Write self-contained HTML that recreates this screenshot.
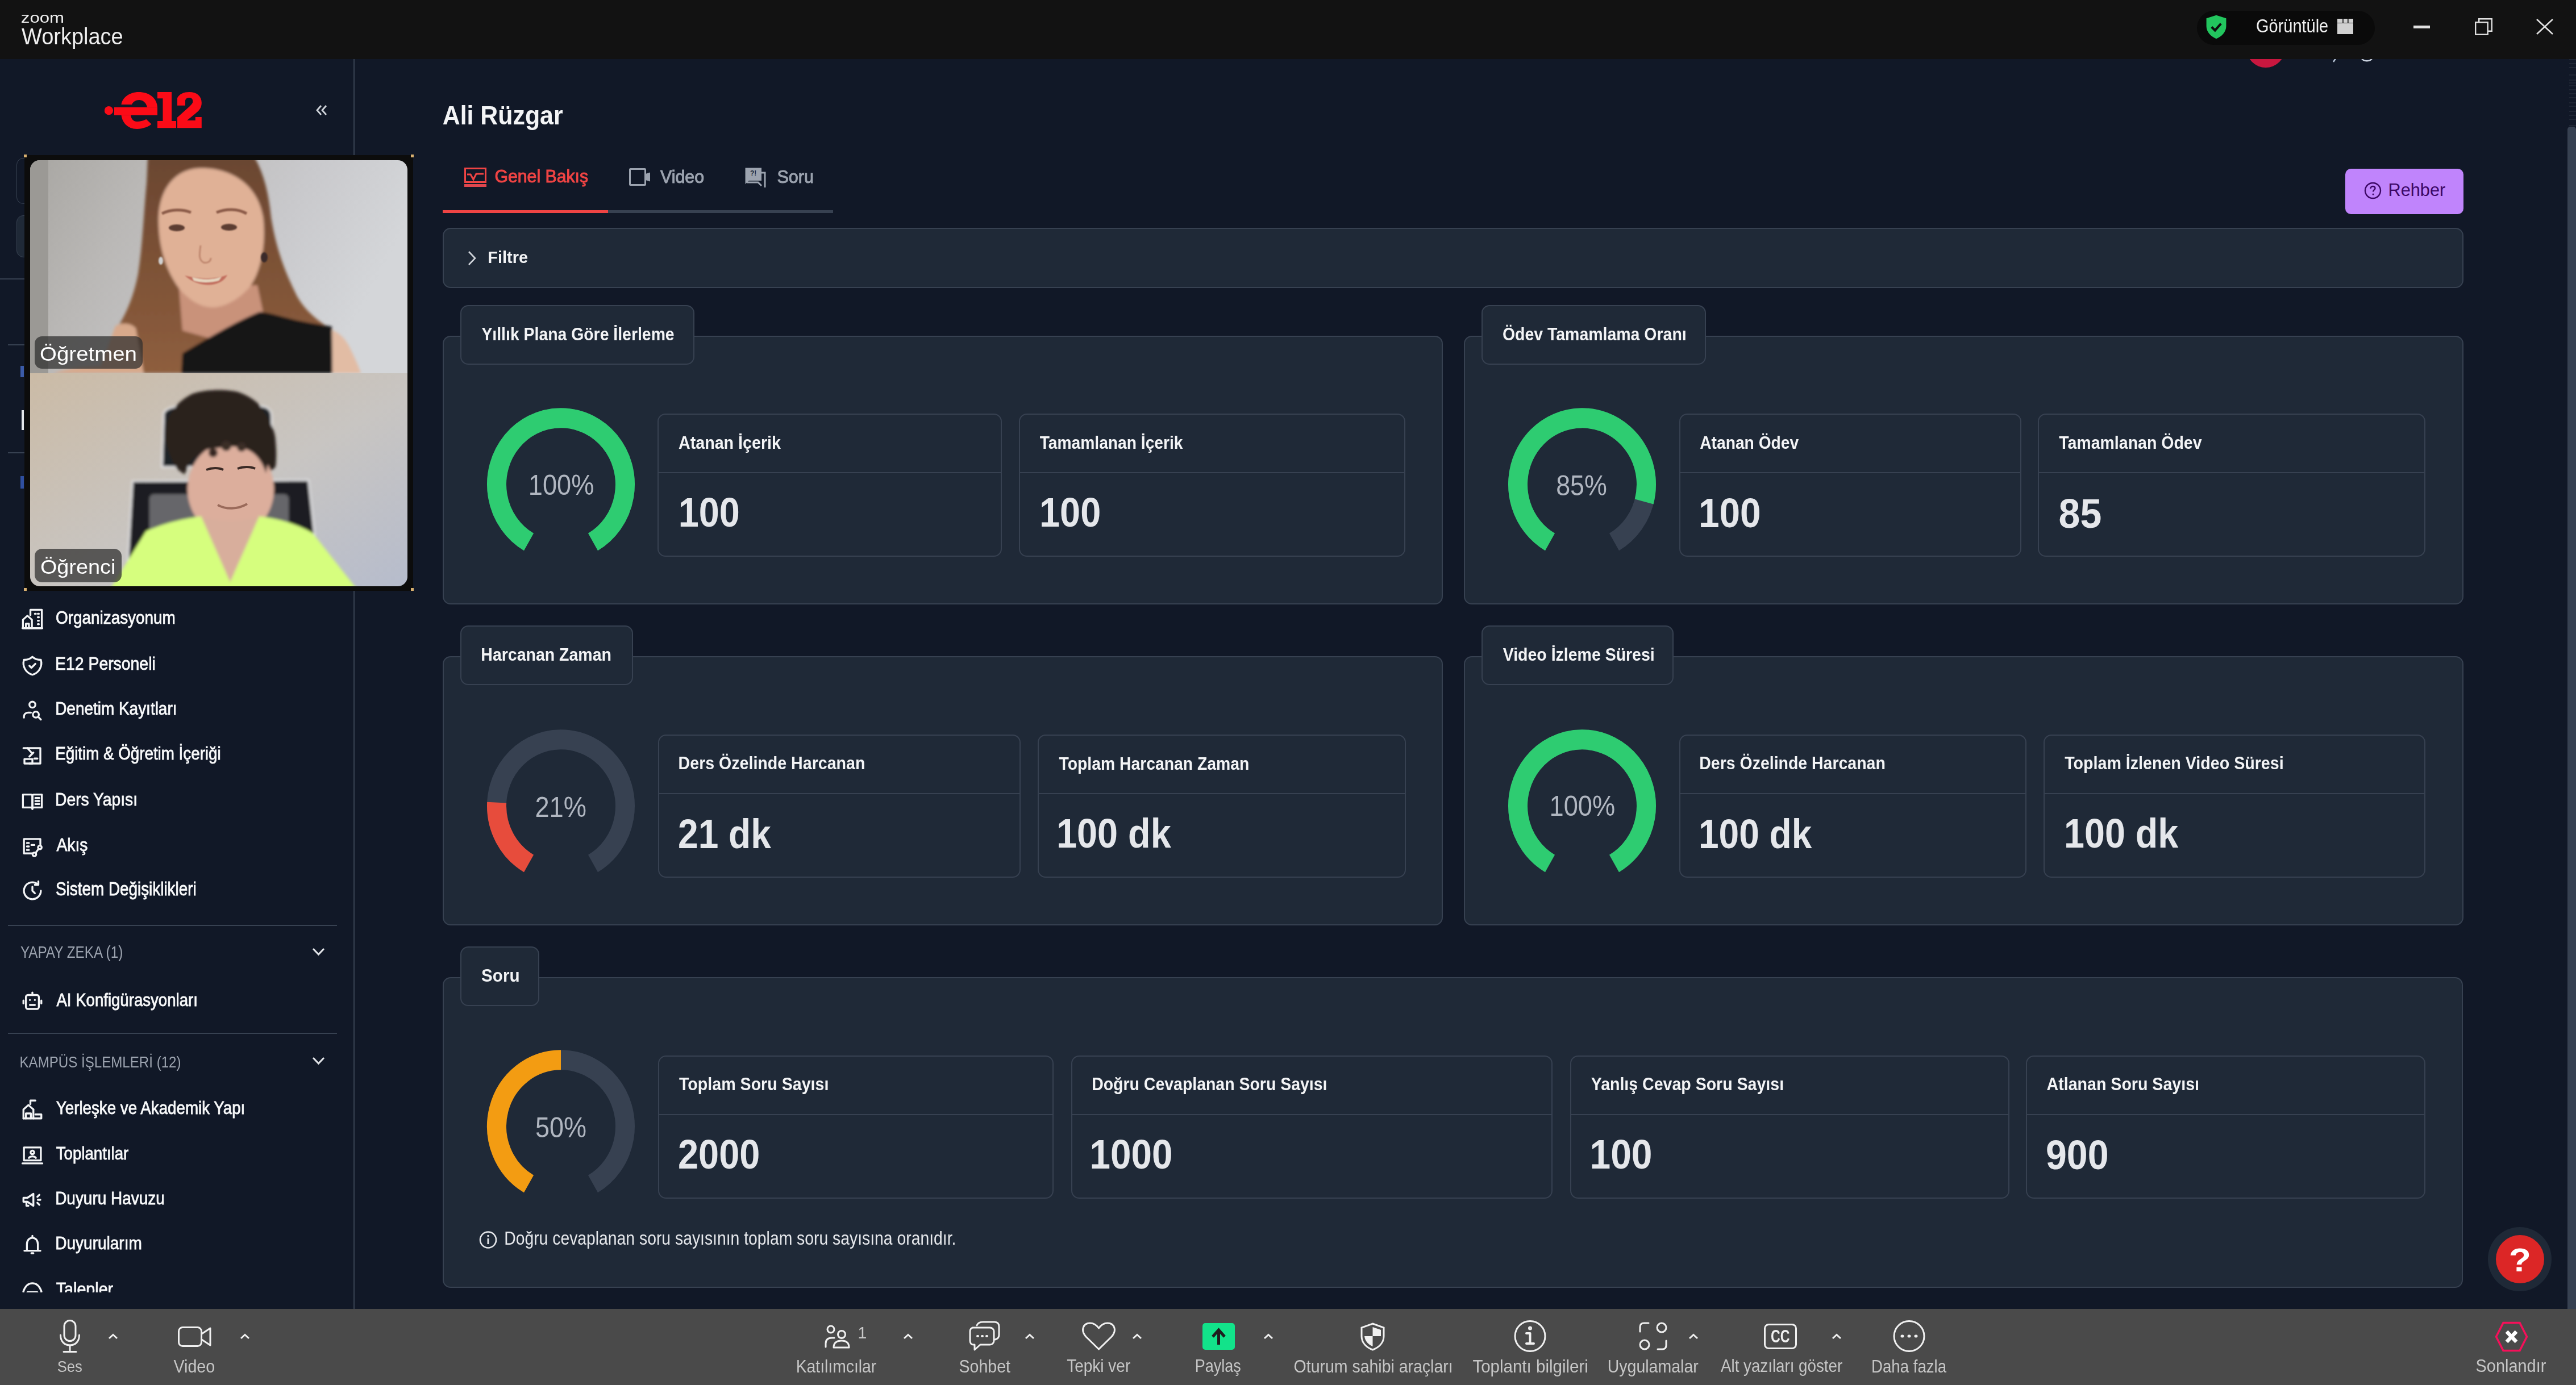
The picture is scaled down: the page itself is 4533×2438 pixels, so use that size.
<!DOCTYPE html>
<html><head><meta charset="utf-8"><title>e12 - Zoom</title>
<style>
html,body{margin:0;padding:0;width:4533px;height:2438px;overflow:hidden;background:#111827}
body{position:relative;font-family:"Liberation Sans",sans-serif}
.a{position:absolute;display:block}
.t{position:absolute;white-space:pre;line-height:1;transform-origin:0 0.85em;font-family:"Liberation Sans",sans-serif}
</style></head><body>
<div class=a style="left:0.0px;top:104.0px;width:4533.0px;height:2200.0px;background:#111827"></div>
<div class=a style="left:3953.0px;top:50.7px;width:68.0px;height:68.0px;background:#c8173f;border-radius:50%"></div>
<svg class=a style="left:4104.0px;top:103.0px;width:8.0px;height:7.0px;" viewBox="0 0 8 7" preserveAspectRatio="none"><path d="M6 0 L2 6" stroke="#b8c4d6" stroke-width="2.5"/></svg>
<svg class=a style="left:4154.0px;top:101.0px;width:22.0px;height:10.0px;" viewBox="0 0 22 10" preserveAspectRatio="none"><path d="M2 1 C3 8 19 8 20 1" stroke="#c8d0dc" stroke-width="2.6" fill="none"/></svg>
<div class=a style="left:4521.0px;top:104.0px;width:12.0px;height:2.0px;background:#1f2634"></div>
<div class=a style="left:4521.0px;top:111.0px;width:12.0px;height:2.0px;background:#1f2634"></div>
<div class=a style="left:4521.0px;top:118.0px;width:12.0px;height:2.0px;background:#1f2634"></div>
<div class=a style="left:4521.0px;top:131.0px;width:12.0px;height:2.0px;background:#1f2634"></div>
<div class=a style="left:4521.0px;top:140.0px;width:12.0px;height:2.0px;background:#1f2634"></div>
<div class=a style="left:4521.0px;top:145.0px;width:12.0px;height:2.0px;background:#1f2634"></div>
<div class=a style="left:4521.0px;top:150.0px;width:12.0px;height:2.0px;background:#1f2634"></div>
<div class=a style="left:4521.0px;top:157.0px;width:12.0px;height:2.0px;background:#1f2634"></div>
<div class=a style="left:4521.0px;top:164.0px;width:12.0px;height:2.0px;background:#1f2634"></div>
<div class=a style="left:4521.0px;top:171.0px;width:12.0px;height:2.0px;background:#1f2634"></div>
<div class=a style="left:4521.0px;top:180.0px;width:12.0px;height:2.0px;background:#1f2634"></div>
<div class=a style="left:4521.0px;top:186.0px;width:12.0px;height:2.0px;background:#1f2634"></div>
<div class=a style="left:4521.0px;top:195.0px;width:12.0px;height:2.0px;background:#1f2634"></div>
<div class=a style="left:4521.0px;top:202.0px;width:12.0px;height:2.0px;background:#1f2634"></div>
<div class=a style="left:4521.0px;top:209.0px;width:12.0px;height:2.0px;background:#1f2634"></div>
<div class=a style="left:4521.0px;top:220.0px;width:12.0px;height:2.0px;background:#1f2634"></div>
<div class=a style="left:0.0px;top:0.0px;width:4533.0px;height:104.0px;background:#121212"></div>
<span class=t style="left:36.8px;top:13.5px;font-size:31.20px;font-weight:400;color:#f0f0f0;transform:scaleY(0.850);">zoom</span>
<span class=t style="left:38.0px;top:45.7px;font-size:37.98px;font-weight:400;color:#f0f0f0;transform:scaleY(1.068);">Workplace</span>
<div class=a style="left:3866.0px;top:19.0px;width:313.0px;height:60.0px;background:#0a0a0a;border-radius:30px"></div>
<svg class=a style="left:3881.0px;top:26.0px;width:38.0px;height:43.0px;" viewBox="0 0 24 27" preserveAspectRatio="none"><path d="M12 0.5 L23 4 V12.5 C23 19 18 24 12 26.5 C6 24 1 19 1 12.5 V4 Z" fill="#22c55e"/><path d="M6.8 13.5 L10.6 17.2 L17.2 9.8" stroke="#0d0d0d" stroke-width="2.6" fill="none"/></svg>
<span class=t style="left:3970.1px;top:32.9px;font-size:28.95px;font-weight:400;color:#f0f0f0;transform:scaleY(1.126);">Görüntüle</span>
<svg class=a style="left:4113.0px;top:33.0px;width:28.0px;height:27.0px;" viewBox="0 0 28 27" preserveAspectRatio="none"><rect x="0" y="8" width="28" height="19" fill="#d0d0d0"/><rect x="0" y="0" width="28" height="7" fill="#d0d0d0"/><rect x="8.5" y="0" width="3" height="7" fill="#5a5a5a"/><rect x="17.5" y="0" width="3" height="7" fill="#5a5a5a"/></svg>
<div class=a style="left:4247.0px;top:45.0px;width:29.0px;height:5.0px;background:#e0e0e0"></div>
<svg class=a style="left:4355.0px;top:32.0px;width:31.0px;height:30.0px;" viewBox="0 0 31 30" preserveAspectRatio="none"><rect x="1.2" y="7.2" width="21.5" height="21.5" fill="none" stroke="#e0e0e0" stroke-width="2.4"/><path d="M7.2 7.2 V1.2 H29.8 V22.8 H22.7" fill="none" stroke="#e0e0e0" stroke-width="2.4"/></svg>
<svg class=a style="left:4463.0px;top:33.0px;width:30.0px;height:28.0px;" viewBox="0 0 30 28" preserveAspectRatio="none"><path d="M1 1 L29 27 M29 1 L1 27" stroke="#e0e0e0" stroke-width="2.6"/></svg>
<div class=a style="left:622.0px;top:104.0px;width:2.0px;height:2200.0px;background:#374151"></div>
<svg class=a style="left:184.0px;top:160.0px;width:172.0px;height:69.0px;" viewBox="0 0 172 69" preserveAspectRatio="none"><g fill="#fb0b17"><circle cx="7.4" cy="34.7" r="7.6"/><path d="M29.5 24 C31 12 44 2 60 2 C78 2 92 12 93 28.8 H75 C73 21 68 16 61 16 C55 16 50 19 48 24 Z"/><path d="M17 28.8 H93 V42.8 H17 Z"/><path d="M29.5 42.8 C31 55 40 67 57 67 C68 67 77 63 82.5 58.5 L73.2 49.8 C69 52.5 63 54 57 54 C51 54 47 50 46 42.8 Z"/><path d="M93 2 H118 V53 H126 V65.3 H93 V53 H102.5 V13.3 H93 Z"/><path d="M128 25.7 V12.4 C132 5 140 2 149 2 C162 2 170.8 9 170.8 21 C170.8 30 166 35 159.8 40 L145 52 H159.8 V46 H170.8 V65.3 H128 V46.7 L150 27 C154 23 155.3 21 155.3 19 C155.3 14 153 12 149 12 C145 12 142 14 142 18 V25.7 Z"/></g></svg>
<svg class=a style="left:555.0px;top:184.0px;width:22.0px;height:20.0px;" viewBox="0 0 22 20" preserveAspectRatio="none"><path d="M10 2 L3 10 L10 18 M19 2 L12 10 L19 18" stroke="#d1d5db" stroke-width="2.8" fill="none"/></svg>
<div class=a style="left:29.0px;top:278.0px;width:111.0px;height:79.0px;border:1.5px solid #374151;border-radius:12px;background:#111827"></div>
<div class=a style="left:29.0px;top:379.0px;width:111.0px;height:72.0px;border:1.5px solid #374151;border-radius:12px;background:#1f2937"></div>
<div class=a style="left:0.0px;top:490.0px;width:600.0px;height:2.0px;background:#374151"></div>
<div class=a style="left:14.0px;top:606.0px;width:586.0px;height:2.0px;background:#374151"></div>
<div class=a style="left:14.0px;top:796.0px;width:586.0px;height:2.0px;background:#374151"></div>
<div class=a style="left:36.0px;top:644.0px;width:6.0px;height:20.0px;background:#3b5ba8"></div>
<div class=a style="left:38.0px;top:722.0px;width:4.0px;height:35.0px;background:#e5e7eb"></div>
<div class=a style="left:36.0px;top:838.0px;width:6.0px;height:22.0px;background:#2f4fa0"></div>
<svg class=a style="left:36.0px;top:1068.8px;width:42.0px;height:42.0px;" viewBox="0 0 24 24" preserveAspectRatio="none"><g fill="none" stroke="#f3f4f6" stroke-width="1.9" stroke-linecap="round" stroke-linejoin="round"><path d="M2.5 21V12.5L7 8.5L11.5 12.5V21Z"/><path d="M5.5 21V16.5H8.5V21"/><path d="M10 8V2.5H21.5V21H11.5"/><path d="M14.5 6.5H15.5M17.5 6.5H18.5M17.5 10H18.5M17.5 13.5H18.5M17.5 17H18.5"/><path d="M2 21H22"/></g></svg><span class=t style="left:98.0px;top:1075.0px;font-size:27.90px;font-weight:400;color:#f9fafb;transform:scaleY(1.137);-webkit-text-stroke:0.7px #f9fafb">Organizasyonum</span>
<svg class=a style="left:36.0px;top:1150.5px;width:42.0px;height:42.0px;" viewBox="0 0 24 24" preserveAspectRatio="none"><g fill="none" stroke="#f3f4f6" stroke-width="1.9" stroke-linecap="round" stroke-linejoin="round"><path d="M12 3a12 12 0 0 0 8.5 3a12 12 0 0 1 -8.5 15a12 12 0 0 1 -8.5 -15a12 12 0 0 0 8.5 -3"/><path d="M9 12l2 2l4 -4"/></g></svg><span class=t style="left:97.1px;top:1154.5px;font-size:28.39px;font-weight:400;color:#f9fafb;transform:scaleY(1.118);-webkit-text-stroke:0.7px #f9fafb">E12 Personeli</span>
<svg class=a style="left:36.0px;top:1229.0px;width:42.0px;height:42.0px;" viewBox="0 0 24 24" preserveAspectRatio="none"><g fill="none" stroke="#f3f4f6" stroke-width="1.9" stroke-linecap="round" stroke-linejoin="round"><path d="M9 6.5a3 3 0 1 0 6 0a3 3 0 1 0 -6 0"/><path d="M3.5 19.5v-1a4 4 0 0 1 4 -4h3"/><path d="M15.5 16.5m-3 0a3 3 0 1 0 6 0a3 3 0 1 0 -6 0"/><path d="M17.8 18.8l2.7 2.7"/></g></svg><span class=t style="left:97.2px;top:1234.5px;font-size:27.95px;font-weight:400;color:#f9fafb;transform:scaleY(1.115);-webkit-text-stroke:0.7px #f9fafb">Denetim Kayıtları</span>
<svg class=a style="left:36.0px;top:1309.0px;width:42.0px;height:42.0px;" viewBox="0 0 24 24" preserveAspectRatio="none"><g fill="none" stroke="#f3f4f6" stroke-width="1.9" stroke-linecap="round" stroke-linejoin="round"><path d="M3 4.5H7L12 10"/><path d="M7 4.5H20V20H9"/><path d="M9 13L13 9"/><path d="M4 15.5H12V20H4Z"/><path d="M14 15H17"/></g></svg><span class=t style="left:97.2px;top:1314.4px;font-size:27.76px;font-weight:400;color:#f9fafb;transform:scaleY(1.122);-webkit-text-stroke:0.7px #f9fafb">Eğitim &amp; Öğretim İçeriği</span>
<svg class=a style="left:36.0px;top:1389.0px;width:42.0px;height:42.0px;" viewBox="0 0 24 24" preserveAspectRatio="none"><g fill="none" stroke="#f3f4f6" stroke-width="1.9" stroke-linecap="round" stroke-linejoin="round"><path d="M2.5 5.5H10.5C11.3 5.5 12 6.2 12 7V20C12 19.2 11.3 18.5 10.5 18.5H2.5Z"/><path d="M21.5 5.5H13.5C12.7 5.5 12 6.2 12 7V20C12 19.2 12.7 18.5 13.5 18.5H21.5Z"/><path d="M15 9H19M15 12H19M15 15H19"/></g></svg><span class=t style="left:97.1px;top:1393.6px;font-size:28.25px;font-weight:400;color:#f9fafb;transform:scaleY(1.108);-webkit-text-stroke:0.7px #f9fafb">Ders Yapısı</span>
<svg class=a style="left:36.0px;top:1469.0px;width:42.0px;height:42.0px;" viewBox="0 0 24 24" preserveAspectRatio="none"><g fill="none" stroke="#f3f4f6" stroke-width="1.9" stroke-linecap="round" stroke-linejoin="round"><path d="M12 19H3.5V4.5H20V10"/><path d="M6.5 8.5H8.5M6.5 12H8.5M6.5 15.5H8.5"/><circle cx="19.5" cy="13" r="1.8"/><circle cx="14" cy="20" r="1.8"/><path d="M18.3 14.3L15.2 18.6"/><path d="M11 10.5H14"/></g></svg><span class=t style="left:99.4px;top:1473.7px;font-size:28.32px;font-weight:400;color:#f9fafb;transform:scaleY(1.115);-webkit-text-stroke:0.7px #f9fafb">Akış</span>
<svg class=a style="left:36.0px;top:1547.0px;width:42.0px;height:42.0px;" viewBox="0 0 24 24" preserveAspectRatio="none"><g fill="none" stroke="#f3f4f6" stroke-width="1.9" stroke-linecap="round" stroke-linejoin="round"><path d="M20.5 12a8.5 8.5 0 1 1 -3 -6.5"/><path d="M18 2.5v3.5h-3.5"/><path d="M12 8v4l2.5 2.5"/></g></svg><span class=t style="left:98.0px;top:1553.3px;font-size:27.87px;font-weight:400;color:#f9fafb;transform:scaleY(1.165);-webkit-text-stroke:0.7px #f9fafb">Sistem Değişiklikleri</span>
<div class=a style="left:14.0px;top:1628.0px;width:579.0px;height:2.0px;background:#374151"></div>
<span class=t style="left:35.9px;top:1666.4px;font-size:24.29px;font-weight:400;color:#9ca3af;transform:scaleY(1.194);">YAPAY ZEKA (1)</span>
<svg class=a style="left:548.0px;top:1666.0px;width:25.0px;height:19.0px;" viewBox="0 0 25 19" preserveAspectRatio="none"><path d="M3 4 L12.5 14 L22 4" stroke="#e5e7eb" stroke-width="3" fill="none"/></svg>
<svg class=a style="left:36.0px;top:1741.0px;width:42.0px;height:42.0px;" viewBox="0 0 24 24" preserveAspectRatio="none"><g fill="none" stroke="#f3f4f6" stroke-width="1.9" stroke-linecap="round" stroke-linejoin="round"><rect x="5.5" y="6" width="13" height="14" rx="2"/><path d="M3 11.5v3M21 11.5v3"/><path d="M9.5 11h.01M14.5 11h.01"/><path d="M9.5 16h5"/><path d="M12 6V3.5"/></g></svg><span class=t style="left:99.4px;top:1747.5px;font-size:27.60px;font-weight:400;color:#f9fafb;transform:scaleY(1.155);-webkit-text-stroke:0.7px #f9fafb">AI Konfigürasyonları</span>
<div class=a style="left:14.0px;top:1818.0px;width:579.0px;height:2.0px;background:#374151"></div>
<span class=t style="left:34.5px;top:1858.5px;font-size:24.11px;font-weight:400;color:#9ca3af;transform:scaleY(1.178);">KAMPÜS İŞLEMLERİ (12)</span>
<svg class=a style="left:548.0px;top:1858.0px;width:25.0px;height:19.0px;" viewBox="0 0 25 19" preserveAspectRatio="none"><path d="M3 4 L12.5 14 L22 4" stroke="#e5e7eb" stroke-width="3" fill="none"/></svg>
<svg class=a style="left:36.0px;top:1932.0px;width:42.0px;height:42.0px;" viewBox="0 0 24 24" preserveAspectRatio="none"><g fill="none" stroke="#f3f4f6" stroke-width="1.9" stroke-linecap="round" stroke-linejoin="round"><path d="M3 21V12L8 7.5L13 12"/><path d="M10 6.5V3H15"/><path d="M5.5 21V16H10.5V21"/><path d="M13 12V21H3"/><path d="M15 17H21V21H13"/></g></svg><span class=t style="left:98.8px;top:1937.9px;font-size:27.74px;font-weight:400;color:#f9fafb;transform:scaleY(1.139);-webkit-text-stroke:0.7px #f9fafb">Yerleşke ve Akademik Yapı</span>
<svg class=a style="left:36.0px;top:2012.0px;width:42.0px;height:42.0px;" viewBox="0 0 24 24" preserveAspectRatio="none"><g fill="none" stroke="#f3f4f6" stroke-width="1.9" stroke-linecap="round" stroke-linejoin="round"><path d="M3.5 4.5H20.5V17.5H3.5Z"/><path d="M2 20.5H22"/><circle cx="12" cy="9.5" r="1.8"/><path d="M8.5 15C9.5 13 14.5 13 15.5 15"/></g></svg><span class=t style="left:98.8px;top:2017.5px;font-size:27.64px;font-weight:400;color:#f9fafb;transform:scaleY(1.122);-webkit-text-stroke:0.7px #f9fafb">Toplantılar</span>
<svg class=a style="left:36.0px;top:2091.0px;width:42.0px;height:42.0px;" viewBox="0 0 24 24" preserveAspectRatio="none"><g fill="none" stroke="#f3f4f6" stroke-width="1.9" stroke-linecap="round" stroke-linejoin="round"><path d="M3 10H7L13 6V18L7 14H3Z"/><path d="M6 14V18H8"/><path d="M17 9l2 -2M17.5 12h2.5M17 15l2 2"/></g></svg><span class=t style="left:97.2px;top:2097.0px;font-size:27.94px;font-weight:400;color:#f9fafb;transform:scaleY(1.100);-webkit-text-stroke:0.7px #f9fafb">Duyuru Havuzu</span>
<svg class=a style="left:36.0px;top:2171.0px;width:42.0px;height:42.0px;" viewBox="0 0 24 24" preserveAspectRatio="none"><g fill="none" stroke="#f3f4f6" stroke-width="1.9" stroke-linecap="round" stroke-linejoin="round"><path d="M12 2.5V4"/><path d="M6.5 17V11C6.5 7 9 4.5 12 4.5C15 4.5 17.5 7 17.5 11V17"/><path d="M4 17.5H20"/><path d="M11 20H13"/></g></svg><span class=t style="left:97.2px;top:2176.2px;font-size:28.04px;font-weight:400;color:#f9fafb;transform:scaleY(1.117);-webkit-text-stroke:0.7px #f9fafb">Duyurularım</span>
<svg class=a style="left:36.0px;top:2251.0px;width:42.0px;height:42.0px;" viewBox="0 0 24 24" preserveAspectRatio="none"><g fill="none" stroke="#f3f4f6" stroke-width="1.9" stroke-linecap="round" stroke-linejoin="round"><path d="M3 12.5C5 7 8.5 4.5 12 4.5C15.5 4.5 19 7 21 12.5"/><path d="M3 12.5V20H21V12.5"/><path d="M7 13.5H17V17H7Z"/></g></svg><span class=t style="left:98.8px;top:2255.7px;font-size:28.65px;font-weight:400;color:#f9fafb;transform:scaleY(1.093);-webkit-text-stroke:0.7px #f9fafb">Talepler</span>
<div class=a style="left:0.0px;top:2275.0px;width:622.0px;height:29.0px;background:#111827"></div>
<div class=a style="left:43.0px;top:273.0px;width:684.0px;height:767.0px;background:#0c0c0c"></div>
<div class=a style="left:53px;top:282px;width:664px;height:375px;border-radius:17px 17px 0 0;overflow:hidden"><svg width="664" height="375" viewBox="0 0 664 375">
<defs>
 <linearGradient id="tbg" x1="0" x2="1" y1="0" y2="0.3"><stop offset="0" stop-color="#a8a6a2"/><stop offset="0.3" stop-color="#bab8b6"/><stop offset="0.7" stop-color="#c9c9cc"/><stop offset="1" stop-color="#d4d6d9"/></linearGradient>
 <linearGradient id="hair1" x1="0" x2="0" y1="0" y2="1"><stop offset="0" stop-color="#6a4632"/><stop offset="0.5" stop-color="#7d5236"/><stop offset="1" stop-color="#8e5e3e"/></linearGradient>
 <filter id="bl1" x="-10%" y="-10%" width="120%" height="120%"><feGaussianBlur stdDeviation="2.5"/></filter>
 <filter id="bl2" x="-10%" y="-10%" width="120%" height="120%"><feGaussianBlur stdDeviation="1.2"/></filter>
</defs>
<rect width="664" height="375" fill="url(#tbg)"/>
<rect x="0" y="0" width="32" height="375" fill="#9b9995"/>
<g filter="url(#bl1)">
<path d="M207 -5 L395 -5 C412 25 420 60 424 100 C432 150 445 190 470 240 C490 275 520 290 552 314 L530 300 L520 375 L133 375 C135 345 140 320 150 300 C170 270 182 240 190 200 C198 150 200 90 205 40 Z" fill="url(#hair1)"/>
<path d="M150 292 C160 285 178 286 186 296 L200 375 L120 375 Z" fill="#d8a98b"/>
<path d="M40 375 C80 362 130 360 170 368 L175 375 Z" fill="#d8a98b"/>
<path d="M530 298 C545 305 552 312 560 325 C570 345 577 360 582 375 L532 375 Z" fill="#e2bca4"/>
<path d="M262 225 L268 300 L340 320 L410 268 L400 220 Z" fill="#c9927a"/>
<path d="M297 14 C350 12 400 40 410 100 C416 150 405 200 385 225 C360 252 335 260 318 259 C295 258 272 240 258 220 C238 190 225 150 226 100 C228 50 255 16 297 14 Z" fill="#e0b196"/>
<path d="M266 375 L268 340 C310 315 360 285 404 267 C420 268 440 275 470 282 C495 287 515 290 531 293 L532 375 Z" fill="#141414"/>
</g>
<g filter="url(#bl2)">
<path d="M232 94 C248 86 268 86 283 92" stroke="#8c5c48" stroke-width="5" fill="none"/>
<path d="M328 92 C345 85 365 85 381 94" stroke="#8c5c48" stroke-width="5" fill="none"/>
<ellipse cx="258" cy="119" rx="14" ry="6" fill="#5c3c32"/>
<ellipse cx="350" cy="118" rx="14" ry="6" fill="#5c3c32"/>
<path d="M300 150 C298 165 296 175 305 180 C312 182 318 178 318 172" stroke="#c08870" stroke-width="3" fill="none"/>
<path d="M272 203 C300 210 325 210 347 202 C338 222 300 228 272 203Z" fill="#c26e5e"/>
<path d="M285 206 C305 211 322 211 337 205 L332 212 C318 216 300 216 288 212Z" fill="#e6d6bf"/>
<ellipse cx="230" cy="177" rx="4" ry="7" fill="#d0d0d0"/>
<ellipse cx="412" cy="171" rx="6" ry="9" fill="#3a2a2a"/>
</g>
</svg></div>
<div class=a style="left:53px;top:657px;width:664px;height:375px;border-radius:0 0 17px 17px;overflow:hidden"><svg width="664" height="375" viewBox="0 0 664 375">
<defs>
 <linearGradient id="sbg" x1="0" x2="1" y1="0" y2="1"><stop offset="0" stop-color="#cbbba6"/><stop offset="0.55" stop-color="#c8c5c2"/><stop offset="1" stop-color="#b6bccc"/></linearGradient>
 <filter id="bl3" x="-10%" y="-10%" width="120%" height="120%"><feGaussianBlur stdDeviation="2.5"/></filter>
</defs>
<rect width="664" height="375" fill="url(#sbg)"/>
<g filter="url(#bl3)">
<path d="M235 70 C240 60 255 58 270 58 L405 58 C418 58 425 65 425 75 L428 165 L232 165 Z" fill="#1f2026" stroke="#e8e8ea" stroke-width="3"/>
<path d="M180 190 L490 188 L505 325 L172 330 Z" fill="#1c1d22" stroke="#e4e4e6" stroke-width="3"/>
<rect x="210" y="213" width="245" height="70" rx="8" fill="#66666a"/>
<path d="M286 36 C310 28 345 28 366 33 C385 40 402 50 409 64 C424 85 432 105 432 121 C434 140 433 155 432 164 C428 170 420 174 415 176 C405 150 390 130 369 127 C350 124 340 132 324 136 C305 140 292 146 284 153 C278 160 275 170 272 178 C262 172 256 166 252 158 C244 140 238 125 238 107 C238 88 244 74 252 64 C262 50 274 42 286 36Z" fill="#2c231f"/>
<ellipse cx="353" cy="204" rx="76" ry="84" fill="#dcae9c"/>
<path d="M284 153 C292 140 310 132 330 132 C350 128 372 126 392 140 C405 150 412 165 415 176 L420 150 C410 128 390 118 369 118 C345 118 320 120 300 130 C290 136 282 146 284 153Z" fill="#2c231f"/>
<circle cx="345" cy="128" r="9" fill="#3a2d28"/><circle cx="322" cy="140" r="8" fill="#352823"/><circle cx="372" cy="130" r="8" fill="#3a2d28"/>
<path d="M141 380 L204 278 C240 262 275 255 301 252 L352 365 L403 252 C440 256 470 266 497 281 L575 380 Z" fill="#d6fe7e"/>
<path d="M301 252 L352 368 L403 252 C380 262 325 262 301 252Z" fill="#d8ae9c"/>
</g>
<path d="M310 170 C320 166 332 166 340 170" stroke="#3a2a25" stroke-width="4" fill="none"/>
<path d="M365 168 C375 164 388 164 396 168" stroke="#3a2a25" stroke-width="4" fill="none"/>
<path d="M330 232 C345 240 365 240 382 230" stroke="#9a6a5a" stroke-width="4" fill="none"/>
</svg></div>
<div class=a style="left:61.0px;top:592.0px;width:190.0px;height:57.0px;background:rgba(45,45,45,0.72);border-radius:13px"></div>
<span class=t style="left:70.1px;top:603.3px;font-size:38.45px;font-weight:400;color:#ffffff;transform:scaleY(0.905);">Öğretmen</span>
<div class=a style="left:61.4px;top:966.0px;width:152.6px;height:59.0px;background:rgba(45,45,45,0.72);border-radius:13px"></div>
<span class=t style="left:70.9px;top:978.7px;font-size:37.82px;font-weight:400;color:#ffffff;transform:scaleY(0.927);">Öğrenci</span>
<div class=a style="left:42.0px;top:272.0px;width:5.0px;height:5.0px;background:#d8b070"></div>
<div class=a style="left:723.0px;top:272.0px;width:5.0px;height:5.0px;background:#d8b070"></div>
<div class=a style="left:42.0px;top:1035.0px;width:5.0px;height:5.0px;background:#d8b070"></div>
<div class=a style="left:723.0px;top:1035.0px;width:5.0px;height:5.0px;background:#d8b070"></div>
<span class=t style="left:778.7px;top:183.4px;font-size:42.86px;font-weight:700;color:#f3f4f6;transform:scaleY(1.062);">Ali Rüzgar</span>
<svg class=a style="left:817.0px;top:295.0px;width:39.0px;height:35.0px;" viewBox="0 0 39 35" preserveAspectRatio="none"><g fill="none" stroke="#ef4444" stroke-width="3"><rect x="1.5" y="1.5" width="36" height="24"/><path d="M5 12 H11 L16 21 L21 11 H34"/></g><rect x="0" y="29" width="39" height="5" fill="#e0464e"/></svg>
<span class=t style="left:870.5px;top:296.3px;font-size:30.22px;font-weight:400;color:#ef4444;transform:scaleY(1.055);-webkit-text-stroke:1px #ef4444">Genel Bakış</span>
<svg class=a style="left:1107.0px;top:296.0px;width:38.0px;height:31.0px;" viewBox="0 0 38 31" preserveAspectRatio="none"><g fill="none" stroke="#9ca3af" stroke-width="3"><rect x="1.5" y="1.5" width="27" height="28" rx="1"/></g><path d="M29 10 L37 7.5 V23.5 L29 21 Z" fill="#9ca3af"/></svg>
<span class=t style="left:1162.0px;top:296.2px;font-size:30.40px;font-weight:400;color:#9ca3af;transform:scaleY(1.049);-webkit-text-stroke:1px #9ca3af">Video</span>
<svg class=a style="left:1310.0px;top:294.0px;width:41.0px;height:37.0px;" viewBox="0 0 41 37" preserveAspectRatio="none"><path d="M1.5 1.5 H30 V24 H8 L1.5 30 Z" fill="#9ca3af"/><path d="M30 10 H36 V36" fill="none" stroke="#9ca3af" stroke-width="3"/><path d="M4 27 H24 L30 33" fill="none" stroke="#9ca3af" stroke-width="3"/><text x="10" y="15" font-size="12" font-family="Liberation Sans" font-weight="700" fill="#1f2937">?!</text></svg>
<span class=t style="left:1367.5px;top:296.1px;font-size:30.50px;font-weight:400;color:#9ca3af;transform:scaleY(1.045);-webkit-text-stroke:1px #9ca3af">Soru</span>
<div class=a style="left:779.0px;top:370.0px;width:687.0px;height:5.0px;background:#374151"></div>
<div class=a style="left:779.0px;top:370.0px;width:291.0px;height:5.0px;background:#ef4444"></div>
<div class=a style="left:4127.0px;top:297.0px;width:208.0px;height:80.0px;background:#c084fc;border-radius:10px"></div>
<svg class=a style="left:4160.0px;top:320.0px;width:31.0px;height:31.0px;" viewBox="0 0 31 31" preserveAspectRatio="none"><circle cx="15.5" cy="15.5" r="13.5" fill="none" stroke="#3b0764" stroke-width="2.4"/><path d="M11.5 12 C11.5 9 13.5 8 15.5 8 C18 8 19.5 9.5 19.5 11.5 C19.5 14 16 14.5 16 17.5" fill="none" stroke="#3b0764" stroke-width="2.4"/><circle cx="16" cy="22" r="1.5" fill="#3b0764"/></svg>
<span class=t style="left:4202.5px;top:319.5px;font-size:30.72px;font-weight:400;color:#3b0764;transform:scaleY(1.000);">Rehber</span>
<div class=a style="left:779.0px;top:401.0px;width:3556.0px;height:106.0px;background:#1f2937;border:2px solid #374151;border-radius:14px;box-sizing:border-box"></div>
<svg class=a style="left:822.0px;top:441.0px;width:18.0px;height:27.0px;" viewBox="0 0 18 27" preserveAspectRatio="none"><path d="M3 2 L14 13.5 L3 25" fill="none" stroke="#d1d5db" stroke-width="2.6"/></svg>
<span class=t style="left:858.3px;top:439.4px;font-size:28.94px;font-weight:700;color:#f3f4f6;transform:scaleY(1.027);">Filtre</span>
<div class=a style="left:779.0px;top:591.0px;width:1760.0px;height:473.0px;background:#1f2937;border:2px solid #374151;border-radius:14px;box-sizing:border-box"></div><div class=a style="left:810.0px;top:536.5px;width:412.0px;height:105.5px;background:#1f2937;border:2px solid #374151;border-radius:14px;box-sizing:border-box"></div><span class=t style="left:847.4px;top:574.9px;font-size:28.40px;font-weight:700;color:#f3f4f6;transform:scaleY(1.123);">Yıllık Plana Göre İlerleme</span>
<svg class=a style="left:852.2px;top:712.8px;width:270.0px;height:279.5px;" viewBox="0 0 270 270" preserveAspectRatio="none"><path d="M78.50 232.86 A113 113 0 1 1 191.50 232.86" stroke="#374151" stroke-width="34" fill="none"/><path d="M78.50 232.86 A113 113 0 1 1 191.50 232.86" stroke="#2ecc71" stroke-width="34" fill="none"/></svg><span class=t style="left:929.8px;top:833.3px;font-size:45.18px;font-weight:400;color:#b0b6c0;transform:scaleY(1.087);">100%</span>
<div class=a style="left:1157.4px;top:728.0px;width:605.3px;height:252.0px;border:2px solid #374151;border-radius:14px;box-sizing:border-box"></div><div class=a style="left:1157.4px;top:831.0px;width:605.3px;height:2.0px;background:#374151"></div><span class=t style="left:1194.0px;top:765.6px;font-size:28.66px;font-weight:700;color:#f3f4f6;transform:scaleY(1.113);">Atanan İçerik</span><span class=t style="left:1193.7px;top:873.4px;font-size:64.78px;font-weight:700;color:#e5e7eb;transform:scaleY(1.107);">100</span>
<div class=a style="left:1792.5px;top:728.0px;width:680.5px;height:252.0px;border:2px solid #374151;border-radius:14px;box-sizing:border-box"></div><div class=a style="left:1792.5px;top:831.0px;width:680.5px;height:2.0px;background:#374151"></div><span class=t style="left:1829.7px;top:766.0px;font-size:28.21px;font-weight:700;color:#f3f4f6;transform:scaleY(1.130);">Tamamlanan İçerik</span><span class=t style="left:1829.1px;top:873.4px;font-size:64.78px;font-weight:700;color:#e5e7eb;transform:scaleY(1.107);">100</span>
<div class=a style="left:2576.0px;top:591.0px;width:1759.0px;height:473.0px;background:#1f2937;border:2px solid #374151;border-radius:14px;box-sizing:border-box"></div><div class=a style="left:2607.0px;top:536.5px;width:395.0px;height:105.5px;background:#1f2937;border:2px solid #374151;border-radius:14px;box-sizing:border-box"></div><span class=t style="left:2643.9px;top:574.8px;font-size:28.48px;font-weight:700;color:#f3f4f6;transform:scaleY(1.119);">Ödev Tamamlama Oranı</span>
<svg class=a style="left:2649.0px;top:712.8px;width:270.0px;height:279.5px;" viewBox="0 0 270 270" preserveAspectRatio="none"><path d="M78.50 232.86 A113 113 0 1 1 191.50 232.86" stroke="#374151" stroke-width="34" fill="none"/><path d="M78.50 232.86 A113 113 0 1 1 244.15 164.25" stroke="#2ecc71" stroke-width="34" fill="none"/></svg><span class=t style="left:2738.2px;top:833.6px;font-size:44.82px;font-weight:400;color:#b0b6c0;transform:scaleY(1.096);">85%</span>
<div class=a style="left:2954.5px;top:728.0px;width:602.5px;height:252.0px;border:2px solid #374151;border-radius:14px;box-sizing:border-box"></div><div class=a style="left:2954.5px;top:831.0px;width:602.5px;height:2.0px;background:#374151"></div><span class=t style="left:2991.2px;top:766.0px;font-size:28.22px;font-weight:700;color:#f3f4f6;transform:scaleY(1.130);">Atanan Ödev</span><span class=t style="left:2988.9px;top:872.6px;font-size:65.73px;font-weight:700;color:#e5e7eb;transform:scaleY(1.091);">100</span>
<div class=a style="left:3586.0px;top:728.0px;width:682.0px;height:252.0px;border:2px solid #374151;border-radius:14px;box-sizing:border-box"></div><div class=a style="left:3586.0px;top:831.0px;width:682.0px;height:2.0px;background:#374151"></div><span class=t style="left:3623.2px;top:765.8px;font-size:28.50px;font-weight:700;color:#f3f4f6;transform:scaleY(1.119);">Tamamlanan Ödev</span><span class=t style="left:3622.6px;top:870.7px;font-size:68.00px;font-weight:700;color:#e5e7eb;transform:scaleY(1.055);">85</span>
<div class=a style="left:779.0px;top:1155.0px;width:1760.0px;height:474.0px;background:#1f2937;border:2px solid #374151;border-radius:14px;box-sizing:border-box"></div><div class=a style="left:810.0px;top:1100.5px;width:304.0px;height:105.5px;background:#1f2937;border:2px solid #374151;border-radius:14px;box-sizing:border-box"></div><span class=t style="left:846.3px;top:1138.8px;font-size:28.51px;font-weight:700;color:#f3f4f6;transform:scaleY(1.118);">Harcanan Zaman</span>
<svg class=a style="left:852.2px;top:1279.3px;width:270.0px;height:279.4px;" viewBox="0 0 270 270" preserveAspectRatio="none"><path d="M78.50 232.86 A113 113 0 1 1 191.50 232.86" stroke="#374151" stroke-width="34" fill="none"/><path d="M78.50 232.86 A113 113 0 0 1 22.15 129.09" stroke="#e74c3c" stroke-width="34" fill="none"/></svg><span class=t style="left:941.4px;top:1399.5px;font-size:45.26px;font-weight:400;color:#b0b6c0;transform:scaleY(1.121);">21%</span>
<div class=a style="left:1157.8px;top:1292.6px;width:638.6px;height:252.0px;border:2px solid #374151;border-radius:14px;box-sizing:border-box"></div><div class=a style="left:1157.8px;top:1395.6px;width:638.6px;height:2.0px;background:#374151"></div><span class=t style="left:1193.6px;top:1330.3px;font-size:28.58px;font-weight:700;color:#f3f4f6;transform:scaleY(1.116);">Ders Özelinde Harcanan</span><span class=t style="left:1193.1px;top:1438.7px;font-size:64.03px;font-weight:700;color:#e5e7eb;transform:scaleY(1.120);">21 dk</span>
<div class=a style="left:1826.3px;top:1292.6px;width:647.7px;height:252.0px;border:2px solid #374151;border-radius:14px;box-sizing:border-box"></div><div class=a style="left:1826.3px;top:1395.6px;width:647.7px;height:2.0px;background:#374151"></div><span class=t style="left:1863.5px;top:1330.5px;font-size:28.33px;font-weight:700;color:#f3f4f6;transform:scaleY(1.125);">Toplam Harcanan Zaman</span><span class=t style="left:1859.1px;top:1438.1px;font-size:64.75px;font-weight:700;color:#e5e7eb;transform:scaleY(1.108);">100 dk</span>
<div class=a style="left:2576.0px;top:1155.0px;width:1759.0px;height:474.0px;background:#1f2937;border:2px solid #374151;border-radius:14px;box-sizing:border-box"></div><div class=a style="left:2607.0px;top:1100.5px;width:338.0px;height:105.5px;background:#1f2937;border:2px solid #374151;border-radius:14px;box-sizing:border-box"></div><span class=t style="left:2644.7px;top:1138.8px;font-size:28.49px;font-weight:700;color:#f3f4f6;transform:scaleY(1.119);">Video İzleme Süresi</span>
<svg class=a style="left:2649.0px;top:1279.3px;width:270.0px;height:279.4px;" viewBox="0 0 270 270" preserveAspectRatio="none"><path d="M78.50 232.86 A113 113 0 1 1 191.50 232.86" stroke="#374151" stroke-width="34" fill="none"/><path d="M78.50 232.86 A113 113 0 1 1 191.50 232.86" stroke="#2ecc71" stroke-width="34" fill="none"/></svg><span class=t style="left:2726.5px;top:1398.1px;font-size:45.22px;font-weight:400;color:#b0b6c0;transform:scaleY(1.090);">100%</span>
<div class=a style="left:2954.5px;top:1292.6px;width:611.2px;height:252.0px;border:2px solid #374151;border-radius:14px;box-sizing:border-box"></div><div class=a style="left:2954.5px;top:1395.6px;width:611.2px;height:2.0px;background:#374151"></div><span class=t style="left:2990.3px;top:1330.4px;font-size:28.47px;font-weight:700;color:#f3f4f6;transform:scaleY(1.120);">Ders Özelinde Harcanan</span><span class=t style="left:2989.0px;top:1438.7px;font-size:64.00px;font-weight:700;color:#e5e7eb;transform:scaleY(1.121);">100 dk</span>
<div class=a style="left:3596.0px;top:1292.6px;width:672.0px;height:252.0px;border:2px solid #374151;border-radius:14px;box-sizing:border-box"></div><div class=a style="left:3596.0px;top:1395.6px;width:672.0px;height:2.0px;background:#374151"></div><span class=t style="left:3633.2px;top:1330.3px;font-size:28.63px;font-weight:700;color:#f3f4f6;transform:scaleY(1.114);">Toplam İzlenen Video Süresi</span><span class=t style="left:3632.1px;top:1438.2px;font-size:64.59px;font-weight:700;color:#e5e7eb;transform:scaleY(1.111);">100 dk</span>
<div class=a style="left:779.0px;top:1720.0px;width:3555.0px;height:547.0px;background:#1f2937;border:2px solid #374151;border-radius:14px;box-sizing:border-box"></div><div class=a style="left:810.0px;top:1665.5px;width:138.6px;height:105.5px;background:#1f2937;border:2px solid #374151;border-radius:14px;box-sizing:border-box"></div><span class=t style="left:847.1px;top:1702.9px;font-size:29.59px;font-weight:700;color:#f3f4f6;transform:scaleY(1.078);">Soru</span>
<svg class=a style="left:852.2px;top:1843.3px;width:270.0px;height:279.4px;" viewBox="0 0 270 270" preserveAspectRatio="none"><path d="M78.50 232.86 A113 113 0 1 1 191.50 232.86" stroke="#374151" stroke-width="34" fill="none"/><path d="M78.50 232.86 A113 113 0 0 1 135.00 22.00" stroke="#f39c12" stroke-width="34" fill="none"/></svg><span class=t style="left:941.9px;top:1964.4px;font-size:45.03px;font-weight:400;color:#b0b6c0;transform:scaleY(1.117);">50%</span>
<div class=a style="left:1157.8px;top:1857.5px;width:696.2px;height:252.0px;border:2px solid #374151;border-radius:14px;box-sizing:border-box"></div><div class=a style="left:1157.8px;top:1960.5px;width:696.2px;height:2.0px;background:#374151"></div><span class=t style="left:1195.0px;top:1895.2px;font-size:28.62px;font-weight:700;color:#f3f4f6;transform:scaleY(1.114);">Toplam Soru Sayısı</span><span class=t style="left:1193.1px;top:2002.9px;font-size:64.79px;font-weight:700;color:#e5e7eb;transform:scaleY(1.107);">2000</span>
<div class=a style="left:1885.4px;top:1857.5px;width:846.6px;height:252.0px;border:2px solid #374151;border-radius:14px;box-sizing:border-box"></div><div class=a style="left:1885.4px;top:1960.5px;width:846.6px;height:2.0px;background:#374151"></div><span class=t style="left:1921.2px;top:1895.3px;font-size:28.46px;font-weight:700;color:#f3f4f6;transform:scaleY(1.120);">Doğru Cevaplanan Soru Sayısı</span><span class=t style="left:1917.6px;top:2002.3px;font-size:65.57px;font-weight:700;color:#e5e7eb;transform:scaleY(1.094);">1000</span>
<div class=a style="left:2762.8px;top:1857.5px;width:772.9px;height:252.0px;border:2px solid #374151;border-radius:14px;box-sizing:border-box"></div><div class=a style="left:2762.8px;top:1960.5px;width:772.9px;height:2.0px;background:#374151"></div><span class=t style="left:2799.7px;top:1895.2px;font-size:28.54px;font-weight:700;color:#f3f4f6;transform:scaleY(1.117);">Yanlış Cevap Soru Sayısı</span><span class=t style="left:2797.5px;top:2002.0px;font-size:65.92px;font-weight:700;color:#e5e7eb;transform:scaleY(1.088);">100</span>
<div class=a style="left:3565.0px;top:1857.5px;width:702.6px;height:252.0px;border:2px solid #374151;border-radius:14px;box-sizing:border-box"></div><div class=a style="left:3565.0px;top:1960.5px;width:702.6px;height:2.0px;background:#374151"></div><span class=t style="left:3601.6px;top:1895.2px;font-size:28.59px;font-weight:700;color:#f3f4f6;transform:scaleY(1.115);">Atlanan Soru Sayısı</span><span class=t style="left:3600.0px;top:2001.7px;font-size:66.25px;font-weight:700;color:#e5e7eb;transform:scaleY(1.083);">900</span>
<svg class=a style="left:843.0px;top:2166.0px;width:32.0px;height:33.0px;" viewBox="0 0 32 33" preserveAspectRatio="none"><circle cx="16" cy="16.5" r="14" fill="none" stroke="#e5e7eb" stroke-width="2.6"/><path d="M16 14 V24" stroke="#e5e7eb" stroke-width="3"/><circle cx="16" cy="9.5" r="1.8" fill="#e5e7eb"/></svg>
<span class=t style="left:887.2px;top:2166.9px;font-size:28.33px;font-weight:400;color:#e5e7eb;transform:scaleY(1.176);">Doğru cevaplanan soru sayısının toplam soru sayısına oranıdır.</span>
<div class=a style="left:4377.5px;top:2160.0px;width:112.2px;height:113.0px;background:#1f2937;border-radius:50%"></div>
<div class=a style="left:4391.5px;top:2173.8px;width:85.1px;height:85.2px;background:#dc2626;border-radius:50%"></div>
<span class=t style="left:4414.8px;top:2183.6px;font-size:64.00px;font-weight:700;color:#ffffff;transform:scaleY(0.906);">?</span>
<div class=a style="left:4518.0px;top:223.0px;width:15.0px;height:2081.0px;background:#374151;border-radius:5px 5px 0 0"></div>
<div class=a style="left:0.0px;top:2304.0px;width:4533.0px;height:134.0px;background:#4a4a4a"></div>
<svg class=a style="left:104.0px;top:2323.0px;width:38.0px;height:58.0px;" viewBox="0 0 38 58" preserveAspectRatio="none"><g fill="none" stroke="#f0f0f0" stroke-width="2" stroke-linecap="round" stroke-linejoin="round"><rect x="9" y="1.5" width="20" height="36" rx="10" stroke-width="3"/><path d="M2.5 27 C2.5 38 9 45 19 45 C29 45 35.5 38 35.5 27" stroke-width="3"/><path d="M19 45 V56 M8 56.5 H30" stroke-width="3"/></g></svg>
<svg class=a style="left:189.0px;top:2347.0px;width:20.0px;height:11.0px;" viewBox="0 0 20 11" preserveAspectRatio="none"><path d="M3 9 L10 2.5 L17 9" fill="none" stroke="#f0f0f0" stroke-width="3"/></svg>
<span class=t style="left:100.7px;top:2393.7px;font-size:25.61px;font-weight:400;color:#c6c6c6;transform:scaleY(1.104);">Ses</span>
<svg class=a style="left:313.0px;top:2335.0px;width:59.0px;height:36.0px;" viewBox="0 0 59 36" preserveAspectRatio="none"><g fill="none" stroke="#f0f0f0" stroke-width="2" stroke-linecap="round" stroke-linejoin="round"><rect x="1.5" y="1.5" width="40" height="33" rx="7" stroke-width="3"/><path d="M42 13 L57 3 V33 L42 23" stroke-width="3"/></g></svg>
<svg class=a style="left:421.0px;top:2347.0px;width:20.0px;height:11.0px;" viewBox="0 0 20 11" preserveAspectRatio="none"><path d="M3 9 L10 2.5 L17 9" fill="none" stroke="#f0f0f0" stroke-width="3"/></svg>
<span class=t style="left:305.5px;top:2391.7px;font-size:28.60px;font-weight:400;color:#c6c6c6;transform:scaleY(1.064);">Video</span>
<svg class=a style="left:1451.0px;top:2332.0px;width:45.0px;height:42.0px;" viewBox="0 0 45 42" preserveAspectRatio="none"><g fill="none" stroke="#f0f0f0" stroke-width="2" stroke-linecap="round" stroke-linejoin="round"><circle cx="11" cy="8" r="6" stroke-width="3"/><circle cx="30" cy="17" r="6.5" stroke-width="3"/><path d="M2 39 V33 C2 26 6 23 13 23 H17" stroke-width="3"/><path d="M16 40 H43 C43 31 38 28 30 28 C22 28 16 31 16 40Z" stroke-width="3"/></g></svg>
<span class=t style="left:1509.5px;top:2331.5px;font-size:28.41px;font-weight:400;color:#c8c8c8;transform:scaleY(1.025);">1</span>
<svg class=a style="left:1588.0px;top:2347.0px;width:20.0px;height:11.0px;" viewBox="0 0 20 11" preserveAspectRatio="none"><path d="M3 9 L10 2.5 L17 9" fill="none" stroke="#f0f0f0" stroke-width="3"/></svg>
<span class=t style="left:1400.7px;top:2391.9px;font-size:28.31px;font-weight:400;color:#c6c6c6;transform:scaleY(1.075);">Katılımcılar</span>
<svg class=a style="left:1705.0px;top:2325.0px;width:55.0px;height:54.0px;" viewBox="0 0 55 54" preserveAspectRatio="none"><g fill="none" stroke="#f0f0f0" stroke-width="2" stroke-linecap="round" stroke-linejoin="round"><path d="M14 8 C16 3 20 2 25 2 H45 C50 2 53 5 53 10 V25 C53 30 50 32 46 33" stroke-width="3"/><path d="M6 12 H37 C41 12 44 15 44 19 V35 C44 39 41 42 37 42 H20 L10 51 V42 H8 C4 42 2 39 2 35 V19 C2 15 4 12 8 12Z" stroke-width="3"/><path d="M15 27 H16 M23 27 H24 M31 27 H32" stroke-width="4"/></g></svg>
<svg class=a style="left:1802.0px;top:2347.0px;width:20.0px;height:11.0px;" viewBox="0 0 20 11" preserveAspectRatio="none"><path d="M3 9 L10 2.5 L17 9" fill="none" stroke="#f0f0f0" stroke-width="3"/></svg>
<span class=t style="left:1687.6px;top:2391.8px;font-size:28.53px;font-weight:400;color:#c6c6c6;transform:scaleY(1.067);">Sohbet</span>
<svg class=a style="left:1903.0px;top:2327.0px;width:61.0px;height:51.0px;" viewBox="0 0 61 51" preserveAspectRatio="none"><g fill="none" stroke="#f0f0f0" stroke-width="2" stroke-linecap="round" stroke-linejoin="round"><path d="M30.5 48 L8 26 C-2 15 3 2 15 2 C22 2 27 6 30.5 11 C34 6 39 2 46 2 C58 2 63 15 53 26 Z" stroke-width="3"/></g></svg>
<svg class=a style="left:1991.0px;top:2347.0px;width:20.0px;height:11.0px;" viewBox="0 0 20 11" preserveAspectRatio="none"><path d="M3 9 L10 2.5 L17 9" fill="none" stroke="#f0f0f0" stroke-width="3"/></svg>
<span class=t style="left:1877.2px;top:2392.2px;font-size:28.01px;font-weight:400;color:#c6c6c6;transform:scaleY(1.087);">Tepki ver</span>
<svg class=a style="left:2116.0px;top:2329.0px;width:57.0px;height:47.0px;" viewBox="0 0 57 47" preserveAspectRatio="none"><rect x="0" y="0" width="57" height="47" rx="5" fill="#12e38a"/><path d="M28.5 38 V15 M18 24 L28.5 12 L39 24" fill="none" stroke="#1e1e1e" stroke-width="5"/></svg>
<svg class=a style="left:2222.0px;top:2347.0px;width:20.0px;height:11.0px;" viewBox="0 0 20 11" preserveAspectRatio="none"><path d="M3 9 L10 2.5 L17 9" fill="none" stroke="#f0f0f0" stroke-width="3"/></svg>
<span class=t style="left:2102.8px;top:2393.1px;font-size:26.99px;font-weight:400;color:#c6c6c6;transform:scaleY(1.128);">Paylaş</span>
<svg class=a style="left:2393.0px;top:2328.0px;width:45.0px;height:50.0px;" viewBox="0 0 45 50" preserveAspectRatio="none"><path d="M22.5 2 L42 9 V24 C42 36 33 44 22.5 48 C12 44 3 36 3 24 V9 Z" fill="none" stroke="#f0f0f0" stroke-width="3"/><path d="M22.5 8 L37 13 V24 H22.5 Z" fill="#f0f0f0"/><path d="M22.5 24 H8 C9 33 15 39 22.5 42 Z" fill="#f0f0f0"/></svg>
<span class=t style="left:2276.6px;top:2391.8px;font-size:28.48px;font-weight:400;color:#c6c6c6;transform:scaleY(1.069);">Oturum sahibi araçları</span>
<svg class=a style="left:2663.0px;top:2323.0px;width:59.0px;height:58.0px;" viewBox="0 0 59 58" preserveAspectRatio="none"><g fill="none" stroke="#f0f0f0" stroke-width="2" stroke-linecap="round" stroke-linejoin="round"><circle cx="29.5" cy="29" r="26.5" stroke-width="3"/><path d="M29.5 24 V42 M23 42 H36 M23 24 H29.5" stroke-width="4"/><circle cx="29.5" cy="15" r="1.5" stroke-width="4"/></g></svg>
<span class=t style="left:2591.4px;top:2390.9px;font-size:29.52px;font-weight:400;color:#c6c6c6;transform:scaleY(1.031);">Toplantı bilgileri</span>
<svg class=a style="left:2883.0px;top:2326.0px;width:52.0px;height:52.0px;" viewBox="0 0 52 52" preserveAspectRatio="none"><g fill="none" stroke="#f0f0f0" stroke-width="2" stroke-linecap="round" stroke-linejoin="round"><path d="M3 18 V10 C3 5 6 3 10 3 H18" stroke-width="3"/><circle cx="41" cy="11" r="8" stroke-width="3"/><circle cx="11" cy="41" r="8" stroke-width="3"/><path d="M49 34 V42 C49 47 46 49 42 49 H34" stroke-width="3"/></g></svg>
<svg class=a style="left:2970.0px;top:2347.0px;width:20.0px;height:11.0px;" viewBox="0 0 20 11" preserveAspectRatio="none"><path d="M3 9 L10 2.5 L17 9" fill="none" stroke="#f0f0f0" stroke-width="3"/></svg>
<span class=t style="left:2828.7px;top:2391.7px;font-size:28.53px;font-weight:400;color:#c6c6c6;transform:scaleY(1.067);">Uygulamalar</span>
<svg class=a style="left:3104.0px;top:2330.0px;width:58.0px;height:45.0px;" viewBox="0 0 58 45" preserveAspectRatio="none"><g fill="none" stroke="#f0f0f0" stroke-width="2" stroke-linecap="round" stroke-linejoin="round"><rect x="1.5" y="1.5" width="55" height="42" rx="7" stroke-width="3"/></g></svg>
<span class=t style="left:3116.1px;top:2344.3px;font-size:23.19px;font-weight:700;color:#f0f0f0;transform:scaleY(1.313);">CC</span>
<svg class=a style="left:3222.0px;top:2347.0px;width:20.0px;height:11.0px;" viewBox="0 0 20 11" preserveAspectRatio="none"><path d="M3 9 L10 2.5 L17 9" fill="none" stroke="#f0f0f0" stroke-width="3"/></svg>
<span class=t style="left:3028.0px;top:2392.4px;font-size:27.73px;font-weight:400;color:#c6c6c6;transform:scaleY(1.098);">Alt yazıları göster</span>
<svg class=a style="left:3330.0px;top:2323.0px;width:59.0px;height:58.0px;" viewBox="0 0 59 58" preserveAspectRatio="none"><g fill="none" stroke="#f0f0f0" stroke-width="2" stroke-linecap="round" stroke-linejoin="round"><circle cx="29.5" cy="29" r="26.5" stroke-width="3"/><path d="M17 29 H18 M29 29 H30 M41 29 H42" stroke-width="5"/></g></svg>
<span class=t style="left:3293.1px;top:2392.5px;font-size:27.60px;font-weight:400;color:#c6c6c6;transform:scaleY(1.103);">Daha fazla</span>
<svg class=a style="left:4390.0px;top:2326.0px;width:59.0px;height:54.0px;" viewBox="0 0 59 54" preserveAspectRatio="none"><path d="M15 2.5 H44 L56.5 27 L44 51.5 H15 L2.5 27 Z" fill="none" stroke="#f5105a" stroke-width="3.5"/><path d="M21 18 L38 36 M38 18 L21 36" stroke="#ffffff" stroke-width="6.5"/></svg>
<span class=t style="left:4356.6px;top:2391.4px;font-size:28.91px;font-weight:400;color:#c6c6c6;transform:scaleY(1.053);">Sonlandır</span>
</body></html>
